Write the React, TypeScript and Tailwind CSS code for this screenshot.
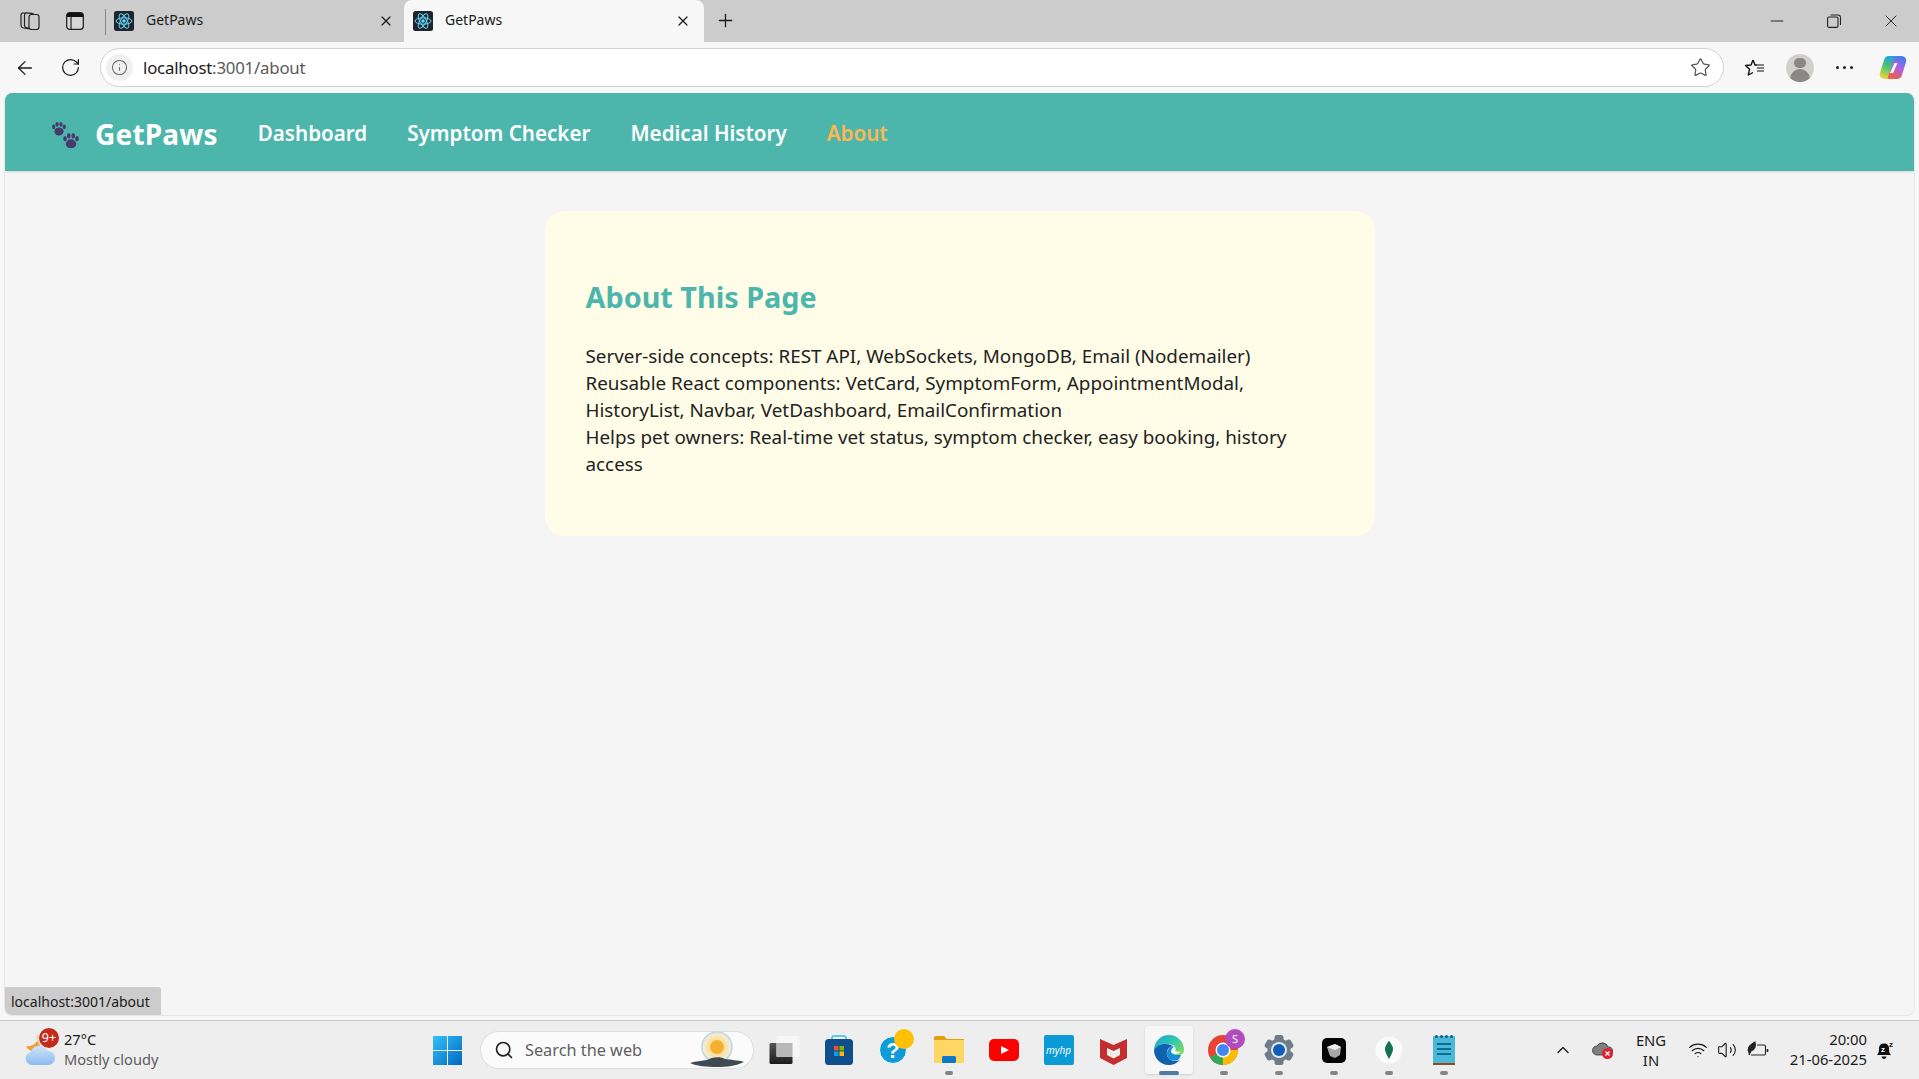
import React from "react";
import { ArrowLeft, ChevronUp, Minus, Plus, RotateCw, Search, Star, Volume2, Wifi, X, Info } from "lucide-react";

const ReactFavicon = () => (
  <svg viewBox="0 0 20 20" className="w-5 h-5 flex-shrink-0">
    <rect width="20" height="20" rx="2.5" fill="#20232a" />
    <circle cx="10" cy="10" r="1.8" fill="#61dafb" />
    <g fill="none" stroke="#61dafb" strokeWidth="1">
      <ellipse cx="10" cy="10" rx="8" ry="3.2" />
      <ellipse cx="10" cy="10" rx="8" ry="3.2" transform="rotate(60 10 10)" />
      <ellipse cx="10" cy="10" rx="8" ry="3.2" transform="rotate(120 10 10)" />
    </g>
  </svg>
);

const Paw = ({ x, y, s }: { x: number; y: number; s: number }) => (
  <g transform={`translate(${x} ${y}) scale(${s})`} fill="#4a3a6b">
    <ellipse cx="0" cy="3" rx="4" ry="3.5" />
    <ellipse cx="-4.6" cy="-1" rx="1.4" ry="2" />
    <ellipse cx="-1.7" cy="-3.2" rx="1.4" ry="2.1" />
    <ellipse cx="1.7" cy="-3.2" rx="1.4" ry="2.1" />
    <ellipse cx="4.6" cy="-1" rx="1.4" ry="2" />
  </g>
);

const Workspaces = () => (
  <svg viewBox="0 0 20 20" className="w-5 h-5 ml-[20px]" fill="#cccccc" stroke="#222" strokeWidth="1.2">
    <rect x="1" y="1.500" width="9.500" height="15" rx="2.500" transform="skewY(8)" />
    <rect x="4.500" y="1.200" width="9.500" height="15" rx="2.500" transform="skewY(6)" />
    <rect x="9" y="3.500" width="10" height="15" rx="2.500" />
  </svg>
);

const TabView = () => (
  <svg viewBox="0 0 18 18" className="w-[18px] h-[18px] ml-[26px]">
    <rect x="0.700" y="0.700" width="16.600" height="16.600" rx="3" fill="#d6d6d6" stroke="#222" strokeWidth="1.300" />
    <path d="M0.700 5V3.500A3 3 0 0 1 3.500 0.700h11A3 3 0 0 1 17.300 3.500V5z" fill="#111" />
    <path d="M5 5v12" stroke="#222" strokeWidth="1.200" />
  </svg>
);

const RestoreIcon = () => (
  <svg viewBox="0 0 14 14" className="w-[14px] h-[14px] mx-[3px]" fill="none" stroke="#222" strokeWidth="1.100">
    <rect x="0.600" y="3" width="10.400" height="10.400" rx="1.500" />
    <path d="M3.500 1h7.500a2.500 2.500 0 0 1 2.500 2.500V11" />
  </svg>
);

const FavoritesIcon = () => (
  <svg viewBox="0 0 22 22" className="w-[22px] h-[22px]" fill="none" stroke="#111" strokeWidth="1.400" strokeLinejoin="round">
    <path d="M9 3l2 5h2M9 3L7 8l-5.500.5 4 3.800-1.200 5.700L9 15.500" />
    <path d="M13 11h7M13 14h7M13 8h7" strokeWidth="1.100" />
  </svg>
);

const Copilot = () => (
  <svg viewBox="0 0 28 25" className="w-[28px] h-[25px]">
    <defs>
      <linearGradient id="cpa" x1="0.600" y1="0" x2="0.300" y2="1">
        <stop offset="0" stopColor="#1f9fe8" />
        <stop offset="0.5" stopColor="#4cc96a" />
        <stop offset="1" stopColor="#f5d13c" />
      </linearGradient>
      <linearGradient id="cpb" x1="0.700" y1="0" x2="0.300" y2="1">
        <stop offset="0" stopColor="#3c7ff0" />
        <stop offset="0.5" stopColor="#b060e0" />
        <stop offset="1" stopColor="#f2603c" />
      </linearGradient>
    </defs>
    <path d="M10 1h8c1 0 1.500 1 1 2L13 22c-.6 1.500-1.500 2-3 2H6C2 24 0 21 1 18L5 5c.7-2.500 2.500-4 5-4z" fill="url(#cpa)" />
    <path d="M18 24h-8c-1 0-1.500-1-1-2L15 3c.6-1.500 1.500-2 3-2h4c4 0 6 3 5 6l-4 13c-.7 2.500-2.500 4-5 4z" fill="url(#cpb)" />
    <path d="M15.500 8h3l-4.500 10h-3z" fill="#fff" />
  </svg>
);

const Weather = () => (
  <svg viewBox="0 0 30 34" className="w-[30px] h-[34px] flex-shrink-0">
    <defs>
      <linearGradient id="wc" x1="0" y1="0" x2="0" y2="1">
        <stop offset="0" stopColor="#cfe3f8" />
        <stop offset="1" stopColor="#8dbbee" />
      </linearGradient>
    </defs>
    <path d="M13 1a11 11 0 0 0 4 13 9 9 0 0 1-16-1 10 10 0 0 0 12-12z" fill="#f0a030" />
    <path d="M7 32a6.500 6.500 0 0 1-1.500-12.800A9.500 9.500 0 0 1 23 18a7 7 0 0 1 0 14z" fill="url(#wc)" />
  </svg>
);

const WinLogo = () => (
  <svg viewBox="0 0 29 29" className="w-[29px] h-[29px]">
    <defs>
      <linearGradient id="wl" x1="0" y1="0" x2="1" y2="1">
        <stop offset="0" stopColor="#35c0f8" />
        <stop offset="1" stopColor="#0067c0" />
      </linearGradient>
    </defs>
    <path d="M0 0h14v14H0zM15 0h14v14H15zM0 15h14v14H0zM15 15h14v14H15z" fill="url(#wl)" />
  </svg>
);

const Sunrise = () => (
  <svg viewBox="0 0 56 38" className="w-[56px] h-[38px]">
    <circle cx="28" cy="17" r="15" fill="#f3ead2" stroke="#bcd8e8" strokeWidth="1.500" />
    <circle cx="28" cy="17" r="11" fill="#fbe3a8" />
    <circle cx="28" cy="17" r="7" fill="#f5b02e" />
    <path d="M1 33c6-2 12-2 17-3 4-3 14-4 18-1 5 1 13 1 19 3-8 4-17 5-27 5S7 36 1 33z" fill="#3f4a52" />
  </svg>
);

const TaskIcon = ({ children, dot, active, className }: { children: React.ReactNode; dot?: boolean; active?: boolean; className?: string }) => (
  <div className={`relative w-[55px] h-full flex items-center justify-center ${className ?? ""}`}>
    {active && <div className="absolute w-[48px] h-[48px] top-[5px] left-[3.500px] rounded bg-[#f7f7f7] shadow-sm" />}
    <div className="relative w-[30px] h-[30px] flex items-center justify-center">{children}</div>
    {dot && <div className="absolute bottom-[4px] left-[23.500px] w-[8px] h-[4px] rounded-full bg-[#858585]" />}
    {active && <div className="absolute bottom-[4px] left-[17.500px] w-[20px] h-[4px] rounded-full bg-[#4f7ba3]" />}
  </div>
);

const StackApp = () => (
  <svg viewBox="0 0 30 30" className="w-[30px] h-[30px] overflow-visible">
    <defs>
      <linearGradient id="sk" x1="0" y1="0" x2="0" y2="1">
        <stop offset="0" stopColor="#555" />
        <stop offset="1" stopColor="#1c1c1c" />
      </linearGradient>
    </defs>
    <rect x="2.500" y="8" width="23" height="21" rx="1.500" fill="url(#sk)" />
    <rect x="9.500" y="1" width="23" height="21" rx="1" fill="#f6f6f6" />
    <rect x="9.500" y="8" width="16" height="14" fill="#b8b8b8" />
  </svg>
);

const StoreApp = () => (
  <svg viewBox="0 0 30 30" className="w-[30px] h-[30px]">
    <path d="M8 7V3a2 2 0 0 1 2-2h10a2 2 0 0 1 2 2v4" fill="none" stroke="#35c0e8" strokeWidth="1.500" />
    <rect x="1" y="4" width="28" height="26" rx="3.500" fill="#114e8c" />
    <path d="M10 11h4.500v4.500H10z" fill="#f25022" />
    <path d="M15.500 11H20v4.500h-4.500z" fill="#7fba00" />
    <path d="M10 16.500h4.500V21H10z" fill="#00a4ef" />
    <path d="M15.500 16.500H20V21h-4.500z" fill="#ffb900" />
  </svg>
);

const HelpApp = () => (
  <svg viewBox="0 0 30 30" className="w-[30px] h-[30px] overflow-visible">
    <circle cx="14" cy="15" r="13.500" fill="#0f9ad8" stroke="#fafafa" strokeWidth="1" />
    <text x="14" y="23" textAnchor="middle" fontSize="22" fontWeight="700" fill="#fff" fontFamily="Liberation Sans, sans-serif">?</text>
    <circle cx="25" cy="4" r="10" fill="#ffc107" />
  </svg>
);

const FolderApp = () => (
  <svg viewBox="0 0 30 30" className="w-[30px] h-[30px]">
    <path d="M0 3a2 2 0 0 1 2-2h8l3 3h17v24H0z" fill="#e0a010" />
    <rect y="5" width="30" height="23" fill="#fdd663" />
    <rect x="8" y="21" width="14" height="7" rx="1.500" fill="#0b78c8" />
  </svg>
);

const YoutubeApp = () => (
  <svg viewBox="0 0 30 22" className="w-[30px] h-[22px]">
    <rect width="30" height="22" rx="5" fill="#ff0000" />
    <path d="M12 7l8 4-8 4z" fill="#fff" />
  </svg>
);

const HpApp = () => (
  <div className="w-[30px] h-[30px] flex-shrink-0 rounded-[2px] bg-[#0a9ad6] flex items-center justify-center text-white text-[10px] italic">
    myhp
  </div>
);

const McafeeApp = () => (
  <svg viewBox="0 0 27 30" className="w-[27px] h-[30px]">
    <path d="M0 4l13.500 6L27 4v19l-13.500 7L0 23zM7 13v7l6.500 3.500L20 20v-7l-6.500 3z" fill="#c42e2e" fillRule="evenodd" />
  </svg>
);

const EdgeApp = () => (
  <svg viewBox="0 0 30 30" className="w-[30px] h-[30px]">
    <defs>
      <linearGradient id="eg" x1="0" y1="0" x2="1" y2="0.800">
        <stop offset="0" stopColor="#1f9fe0" />
        <stop offset="0.55" stopColor="#30c8b0" />
        <stop offset="1" stopColor="#7fdc5c" />
      </linearGradient>
    </defs>
    <path d="M0 15a15 15 0 0 1 30 0c0 3-2 5-6 5h-5c-3-4-1-8 2-9-5-3-16-2-21 4z" fill="url(#eg)" />
    <path d="M0 15C3 9 13 7 19 11c-4 1-7 4-6 9 1 4 6 8 13 5-3 3-7 5-11 5C6 30 0 23 0 15z" fill="#0f62ae" />
    <path d="M13 20c-.6-4 2-8 6-9 1 3 1 6 1 9h7c-1 3-2 4-3 5-6 2-10-1-11-5z" fill="#1a8fd8" />
    <path d="M17 17c0-3 2-5 4-5 1 2 1 3 0 4 2 1 5 1 6 0-1 2-3 3-5 3s-4 0-5-2z" fill="#f7f7f7" />
  </svg>
);

const ChromeApp = () => (
  <svg viewBox="0 0 30 30" className="w-[30px] h-[30px] overflow-visible">
    <circle cx="14" cy="15" r="15" fill="#ea4335" />
    <path d="M14 15L1 22.500A15 15 0 0 0 14 30z" fill="#34a853" />
    <path d="M14 15h15a15 15 0 0 1-15 15z" fill="#fbbc04" />
    <circle cx="14" cy="15" r="7.500" fill="#fff" />
    <circle cx="14" cy="15" r="6" fill="#4285f4" />
    <circle cx="26" cy="4" r="10" fill="#b14cc0" />
    <text x="26" y="8" textAnchor="middle" fontSize="11" fill="#fff" fontFamily="Noto Sans, sans-serif">S</text>
  </svg>
);

const GearApp = () => (
  <svg viewBox="0 0 30 30" className="w-[30px] h-[30px]">
    <g fill="#6f7d8a">
      <rect x="10.500" y="0" width="9" height="30" rx="2.500" />
      <rect x="10.500" y="0" width="9" height="30" rx="2.500" transform="rotate(60 15 15)" />
      <rect x="10.500" y="0" width="9" height="30" rx="2.500" transform="rotate(120 15 15)" />
      <circle cx="15" cy="15" r="11.500" />
    </g>
    <circle cx="15" cy="15" r="8" fill="#dfe6ec" />
    <circle cx="15" cy="15" r="6" fill="#0f5fb8" />
  </svg>
);

const BoxApp = () => (
  <svg viewBox="0 0 24 25" className="w-[24px] h-[25px]">
    <rect width="24" height="25" rx="5" fill="#050505" />
    <path d="M5 9l8-3 6 3-1 8-5 3-5-2z" fill="#a8a8a8" />
    <path d="M5 9l8-3 6 3-6 3z" fill="#ededed" />
  </svg>
);

const MongoApp = () => (
  <svg viewBox="0 0 30 30" className="w-[28px] h-[28px]">
    <circle cx="15" cy="15" r="14.500" fill="#fafafa" />
    <path d="M15 5c3 4 5 7 4 11s-3 6-4 9c-1-3-3-5-4-9s1-7 4-11z" fill="#13734d" />
  </svg>
);

const NotesApp = () => (
  <svg viewBox="0 0 22 30" className="w-[22px] h-[30px]">
    <rect y="1" width="22" height="27" rx="1" fill="#4ab8d8" />
    <rect y="28" width="22" height="2" fill="#9a4a18" />
    <g fill="#0f5f84">
      <circle cx="3.500" cy="1.500" r="1.500" />
      <circle cx="8.500" cy="1.500" r="1.500" />
      <circle cx="13.500" cy="1.500" r="1.500" />
      <circle cx="18.500" cy="1.500" r="1.500" />
    </g>
    <path d="M4 9h14M4 14h14M4 19h14" stroke="#0f6a94" strokeWidth="2" />
  </svg>
);

const CloudError = () => (
  <svg viewBox="0 0 22 20" className="w-[22px] h-[20px]">
    <path d="M5 15a4.500 4.500 0 0 1 0-9 6 6 0 0 1 11 1 4 4 0 0 1 1 8z" fill="#7f7f7f" stroke="#333" strokeWidth="0.800" />
    <circle cx="15.500" cy="13.500" r="5.500" fill="#e02030" />
    <path d="M13.500 11.500l4 4M17.500 11.500l-4 4" stroke="#fff" strokeWidth="1.300" />
  </svg>
);

const Battery = () => (
  <svg viewBox="0 0 22 18" className="w-[22px] h-[18px]" fill="none" stroke="#222" strokeWidth="1.100">
    <path d="M10 4h7a1.500 1.500 0 0 1 1.500 1.500v7A1.500 1.500 0 0 1 17 14H4" />
    <path d="M20.500 8v3" strokeWidth="1.600" />
    <path d="M1 10C1 6 4 3 8 1c1 4 0 8-4 9l-2 4" fill="#222" />
  </svg>
);

const BellSnooze = () => (
  <svg viewBox="0 0 20 20" className="w-[20px] h-[20px]">
    <path d="M2 15c1.500-1.500 2-3 2-7 0-2.500 2-4.500 5-4.500S14 5.500 14 8c0 4 .5 5.500 2 7z" fill="#111" />
    <path d="M6.500 16.500a2.500 2.500 0 0 0 5 0z" fill="#111" />
    <text x="6" y="12" fontSize="8" fontWeight="700" fill="#fff" fontFamily="Liberation Sans, sans-serif">z</text>
    <text x="14" y="7" fontSize="8" fontWeight="700" fill="#111" fontFamily="Liberation Sans, sans-serif">z</text>
  </svg>
);

const App = () => {
  return (
    <div className="h-screen w-full flex flex-col overflow-hidden bg-[#f7f7f7] text-[#1a1a1a] font-['Noto_Sans',sans-serif]">
      {/* tab strip */}
      <div className="h-[42px] flex-shrink-0 bg-[#cccccc] flex items-stretch">
        <div className="w-[105px] flex items-center">
          <Workspaces />
          <TabView />
        </div>
        <div className="w-[299px] flex items-center pl-[9px] relative">
          <div className="absolute left-0 top-[9px] w-px h-[26px] bg-[#8a8a8a]" />
          <ReactFavicon />
          <span className="ml-[12px] mb-[3px] text-[14px]">GetPaws</span>
          <X className="w-[16px] h-[16px] absolute right-[10px] top-[13px]" strokeWidth={1.8} />
        </div>
        <div className="w-[300px] flex items-center pl-[9px] relative bg-[#f7f7f7] rounded-t-lg">
          <ReactFavicon />
          <span className="ml-[12px] mb-[3px] text-[14px]">GetPaws</span>
          <X className="w-[16px] h-[16px] absolute right-[13px] top-[13px]" strokeWidth={1.8} />
        </div>
        <div className="ml-[11px] mb-[2px] flex items-center">
          <Plus className="w-[21px] h-[21px]" strokeWidth={1.5} />
        </div>
        <div className="ml-auto flex items-center pr-[18px] gap-[37px]">
          <Minus className="w-[20px] h-[20px]" strokeWidth={1.1} />
          <RestoreIcon />
          <X className="w-[20px] h-[20px]" strokeWidth={1.1} />
        </div>
      </div>

      {/* toolbar */}
      <div className="h-[51px] flex-shrink-0 flex items-center pl-[14px]">
        <ArrowLeft className="w-[22px] h-[22px]" strokeWidth={1.4} />
        <RotateCw className="w-[21px] h-[21px] ml-[24px]" strokeWidth={1.4} />
        <div className="ml-[19px] w-[1624px] flex-shrink-0 h-[39px] bg-white border border-[#d2d2d2] rounded-full flex items-center pl-[5px]">
          <div className="w-[27px] h-[27px] rounded-full bg-[#f0f0f0] flex items-center justify-center">
            <Info className="w-[17px] h-[17px] text-[#666]" strokeWidth={1.5} />
          </div>
          <span className="ml-[10px] text-[16.800px] tracking-[-0.2px]">
            localhost<span className="text-[#5a5a5a]">:3001/about</span>
          </span>
          <Star className="ml-auto mr-[12px] w-[21px] h-[21px] text-[#555]" strokeWidth={1.4} />
        </div>
        <div className="ml-[20px]">
          <FavoritesIcon />
        </div>
        <div className="ml-[20px] w-[28px] h-[28px] rounded-full bg-[#d2d0cd] overflow-hidden flex flex-col items-center">
          <div className="mt-[4px] w-[12px] h-[12px] rounded-full bg-[#8a8886]" />
          <div className="mt-[1px] w-[20px] h-[14px] rounded-t-full bg-[#8a8886]" />
        </div>
        <div className="ml-[22px] w-[17px] flex justify-between">
          <div className="w-[3px] h-[3px] rounded-full bg-[#222]" />
          <div className="w-[3px] h-[3px] rounded-full bg-[#222]" />
          <div className="w-[3px] h-[3px] rounded-full bg-[#222]" />
        </div>
        <div className="ml-[26px]">
          <Copilot />
        </div>
      </div>

      {/* page */}
      <div className="flex-1 min-h-0 px-[4px] pb-[4px]">
        <div className="relative h-full bg-[#f5f5f5] rounded-lg border-b border-x border-[#e6e6e6] overflow-hidden">
          <nav className="h-[78px] bg-[#4db6ac] flex items-center pt-[3px] pl-[45px] gap-[40px] shadow-sm">
            <div className="flex items-center">
              <svg viewBox="0 0 30 28" className="w-[30px] h-[28px]">
                <Paw x={9} y={8} s={1.15} />
                <Paw x={21} y={20} s={1.3} />
              </svg>
              <span className="ml-[15px] text-[28px] font-bold text-white tracking-[0.2px]">GetPaws</span>
            </div>
            <a className="text-[20.600px] font-semibold text-white">Dashboard</a>
            <a className="text-[20.600px] font-semibold text-white">Symptom Checker</a>
            <a className="text-[20.600px] font-semibold text-white">Medical History</a>
            <a className="text-[20.600px] font-semibold text-[#ffb74d]">About</a>
          </nav>
          <div className="mx-auto mt-[40px] w-[830px] h-[325px] bg-[#fffde7] rounded-[20px] pr-[40px] pl-[41px] pt-[40px]">
            <h2 className="mt-[26px] text-[28.800px] font-bold text-[#4db6ac] leading-[40px]">About This Page</h2>
            <p className="mt-[26px] text-[18.850px] leading-[27px] text-[#222]">
              Server-side concepts: REST API, WebSockets, MongoDB, Email (Nodemailer)
              <br />
              Reusable React components: VetCard, SymptomForm, AppointmentModal, HistoryList, Navbar, VetDashboard, EmailConfirmation
              <br />
              Helps pet owners: Real-time vet status, symptom checker, easy booking, history access
            </p>
          </div>
          <div className="absolute left-0 bottom-0 w-[156px] h-[28px] bg-[#cccccc] rounded-tr-[3px] flex items-center pl-[6px] text-[14px]">
            localhost:3001/about
          </div>
        </div>
      </div>

      {/* taskbar */}
      <div className="h-[59px] flex-shrink-0 bg-[#eeeeee] border-t border-[#c8c8c8] flex items-stretch relative">
        <div className="w-[433px] flex items-center pl-[25px] relative">
          <Weather />
          <div className="absolute left-[39px] top-[7px] w-[20px] h-[20px] rounded-full bg-[#c42b1c] text-white text-[12.500px] flex items-center justify-center">
            9+
          </div>
          <div className="ml-[9px] mb-[2px] text-[14.600px] leading-[20px]">
            <div>27°C</div>
            <div className="text-[#5c5c5c]">Mostly cloudy</div>
          </div>
        </div>
        <div className="flex items-center">
          <WinLogo />
        </div>
        <div className="ml-[18px] my-auto w-[274px] h-[38px] rounded-full bg-[#fbfbfb] border border-[#dedede] flex items-center pl-[13px] relative">
          <Search className="w-[20px] h-[20px] text-[#222]" strokeWidth={2} />
          <span className="ml-[11px] text-[16.300px] text-[#5f5f5f]">Search the web</span>
          <div className="absolute right-[8px] bottom-0">
            <Sunrise />
          </div>
        </div>
        <TaskIcon><StackApp /></TaskIcon>
        <TaskIcon className="ml-[2px]"><StoreApp /></TaskIcon>
        <TaskIcon><HelpApp /></TaskIcon>
        <TaskIcon dot><FolderApp /></TaskIcon>
        <TaskIcon><YoutubeApp /></TaskIcon>
        <TaskIcon><HpApp /></TaskIcon>
        <TaskIcon><McafeeApp /></TaskIcon>
        <TaskIcon active><EdgeApp /></TaskIcon>
        <TaskIcon dot><ChromeApp /></TaskIcon>
        <TaskIcon dot><GearApp /></TaskIcon>
        <TaskIcon dot><BoxApp /></TaskIcon>
        <TaskIcon dot><MongoApp /></TaskIcon>
        <TaskIcon dot><NotesApp /></TaskIcon>
        <div className="ml-auto flex items-center pr-[24px]">
          <ChevronUp className="w-[20px] h-[20px]" strokeWidth={1.6} />
          <div className="ml-[19px]"><CloudError /></div>
          <div className="ml-[17px] mb-[1px] w-[40px] text-center text-[14.800px] leading-[20px]">
            <div>ENG</div>
            <div>IN</div>
          </div>
          <Wifi className="ml-[17px] w-[20px] h-[20px]" strokeWidth={1.4} />
          <Volume2 className="ml-[9px] w-[20px] h-[20px]" strokeWidth={1.3} />
          <div className="ml-[10px]"><Battery /></div>
          <div className="ml-[16px] mb-[2px] w-[82px] text-right text-[14.800px] leading-[20px]">
            <div>20:00</div>
            <div>21-06-2025</div>
          </div>
          <div className="ml-[8px]"><BellSnooze /></div>
        </div>
      </div>
    </div>
  );
};

export default App;
